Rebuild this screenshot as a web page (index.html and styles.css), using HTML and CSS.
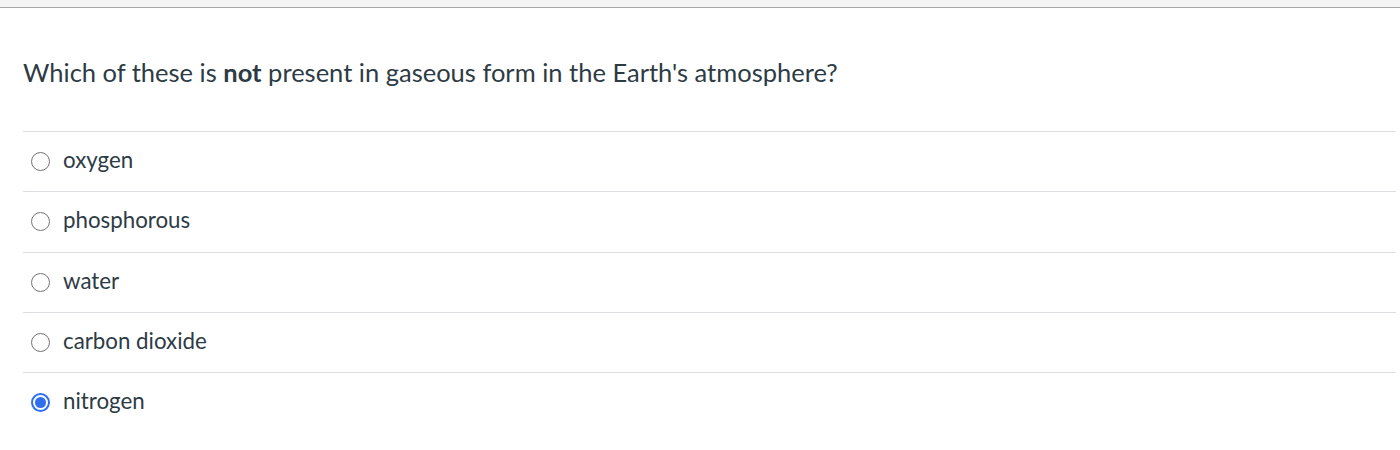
FILE: index.html
```html
<!DOCTYPE html>
<html>
<head>
<meta charset="utf-8">
<link rel="stylesheet" href="styles.css">
</head>
<body>
<div class="topbar"></div>
<div class="quiz">
  <div class="question">Which of these is <strong>not</strong> present in gaseous form in the Earth's atmosphere?</div>
  <div class="answers">
    <label class="answer"><span class="radio"></span><span class="label">oxygen</span></label>
    <label class="answer"><span class="radio"></span><span class="label">phosphorous</span></label>
    <label class="answer"><span class="radio"></span><span class="label">water</span></label>
    <label class="answer"><span class="radio"></span><span class="label">carbon dioxide</span></label>
    <label class="answer"><span class="radio checked"></span><span class="label">nitrogen</span></label>
  </div>
</div>
</body>
</html>
```
FILE: styles.css
```css
html, body {
  margin: 0;
  padding: 0;
  background: #ffffff;
}
body {
  font-family: Lato, "Noto Sans", sans-serif;
  color: #2d3b45;
}
.topbar {
  height: 7px;
  background: #f4f4f4;
  border-bottom: 1px solid #a6a6a6;
}
.quiz {
  padding: 0 4px 0 23px;
}
.question {
  font-size: 25.5px;
  line-height: 30px;
  padding-top: 49px;
  padding-bottom: 44px;
}
.question strong {
  font-weight: 700;
}
.answers {
  display: flex;
  flex-direction: column;
}
.answer {
  display: flex;
  align-items: center;
  height: 59.25px;
  border-top: 1px solid #dcdfe1;
  font-size: 22.3px;
}
.radio {
  box-sizing: border-box;
  width: 19px;
  height: 19px;
  border-radius: 50%;
  border: 1.5px solid #737373;
  margin-left: 8px;
  margin-right: 13px;
  flex: none;
  position: relative;
}
.radio.checked {
  border: 2px solid #2f6fed;
  background: #ffffff;
}
.radio.checked::after {
  content: "";
  position: absolute;
  left: 2px;
  top: 2px;
  width: 11px;
  height: 11px;
  border-radius: 50%;
  background: #2f6fed;
}
.label {
  line-height: 24px;
  padding-bottom: 3px;
}
```
